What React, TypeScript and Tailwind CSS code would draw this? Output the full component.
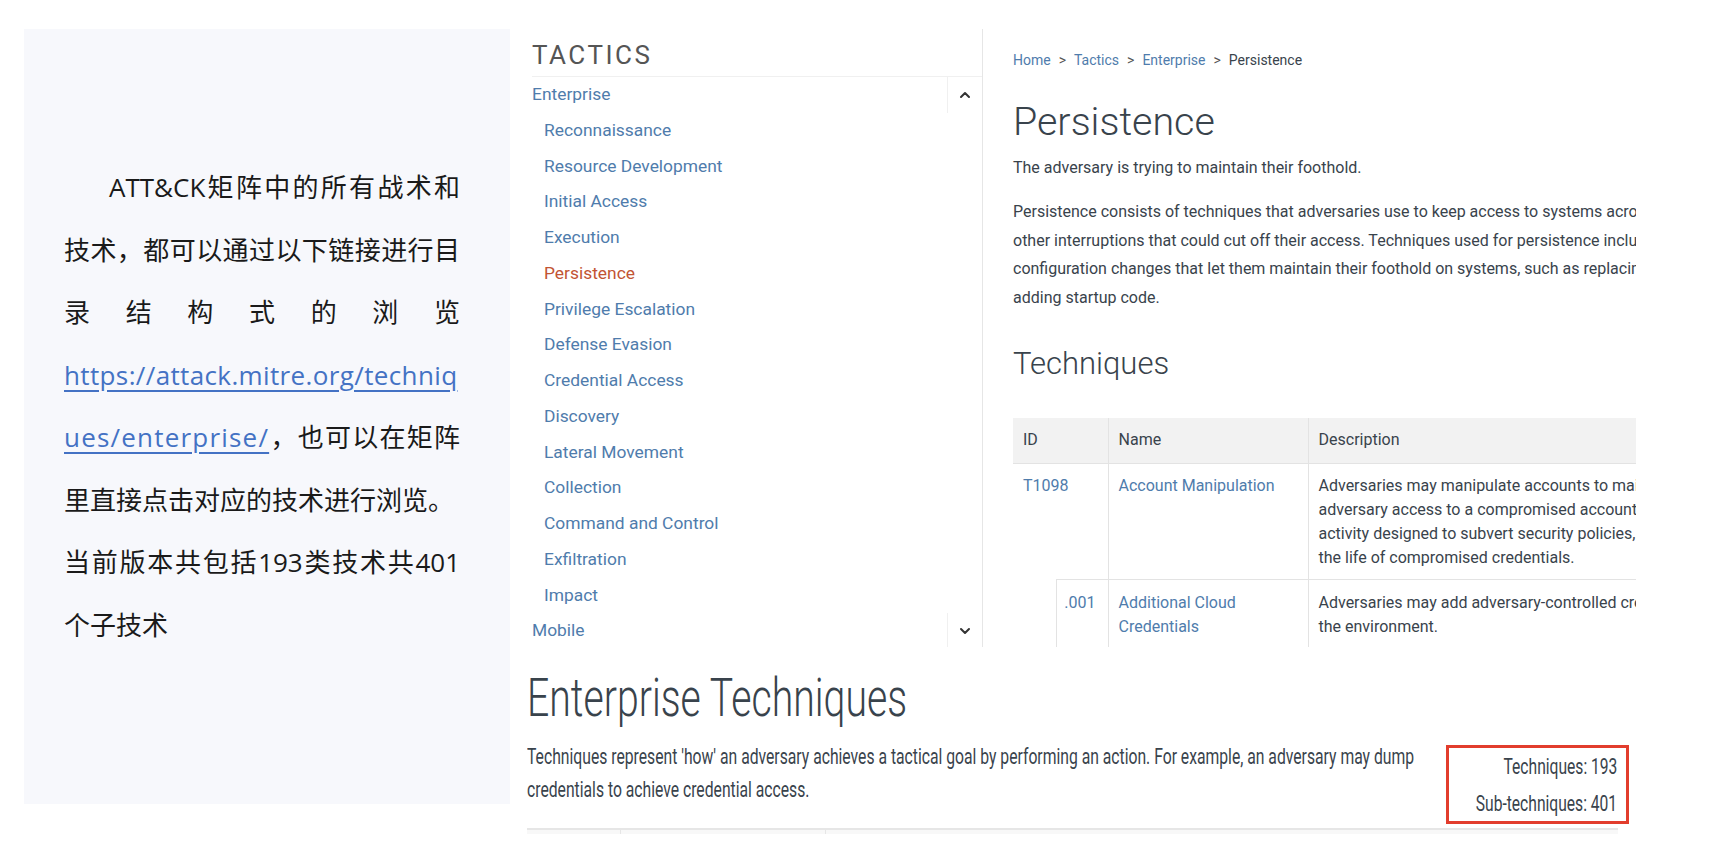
import { ChevronDown, ChevronUp } from "lucide-react";

const tactics = [
  "Reconnaissance",
  "Resource Development",
  "Initial Access",
  "Execution",
  "Persistence",
  "Privilege Escalation",
  "Defense Evasion",
  "Credential Access",
  "Discovery",
  "Lateral Movement",
  "Collection",
  "Command and Control",
  "Exfiltration",
  "Impact",
];

const persistenceText = [
  "Persistence consists of techniques that adversaries use to keep access to systems across restarts, changed credentials, and",
  "other interruptions that could cut off their access. Techniques used for persistence include any access, action, or",
  "configuration changes that let them maintain their foothold on systems, such as replacing or hijacking legitimate code or",
  "adding startup code.",
];

function NotePanel() {
  return (
    <div className="ml-[24px] mt-[29px] h-[775px] w-[486px] shrink-0 bg-[#f7f8fc] pl-[40px] pt-[127px]">
      <div className="w-[396px] font-['Open_Sans','Noto_Sans_CJK_SC',sans-serif] text-[26px] leading-[62.5px] text-[#1a1a1a]">
        <div className="text-justify indent-[45px] [text-align-last:justify]">ATT&amp;CK矩阵中的所有战术和</div>
        <div className="text-justify [text-align-last:justify]">技术，都可以通过以下链接进行目</div>
        <div className="text-justify [text-align-last:justify]">录结构式的浏览</div>
        <div className="whitespace-nowrap tracking-[0.37px]">
          <a className="text-[#4472c4] underline underline-offset-[5px]">https://attack.mitre.org/techniq</a>
        </div>
        <div className="text-justify [text-align-last:justify]">
          <a className="tracking-[1.2px] text-[#4472c4] underline underline-offset-[5px]">ues/enterprise/</a>，也可以在矩阵
        </div>
        <div>里直接点击对应的技术进行浏览。</div>
        <div className="text-justify [text-align-last:justify]">当前版本共包括193类技术共401</div>
        <div>个子技术</div>
      </div>
    </div>
  );
}

function Sidebar() {
  return (
    <aside className="h-[618px] w-[451px] shrink-0 overflow-hidden border-r border-[#e6e6e6]">
      <div className="border-b border-[#f0f0f0] pb-[7px] pt-[12px] text-[26px] leading-[28px] tracking-[2.5px] text-[#555]">
        TACTICS
      </div>
      <div className="text-[17.4px]">
        <div className="flex h-[35.75px]">
          <span className="flex-1 leading-[35.75px] text-[#4f7cac]">Enterprise</span>
          <span className="flex w-[35px] items-center justify-center border-l border-[#f0f0f0] text-[#333]">
            <ChevronUp size={16} strokeWidth={3} />
          </span>
        </div>
        {tactics.map((t) => (
          <div
            key={t}
            className={`h-[35.75px] pl-[12px] leading-[35.75px] ${
              t === "Persistence" ? "text-[#c25433]" : "text-[#4f7cac]"
            }`}
          >
            {t}
          </div>
        ))}
        <div className="flex h-[35.75px]">
          <span className="flex-1 leading-[35.75px] text-[#4f7cac]">Mobile</span>
          <span className="flex w-[35px] items-center justify-center border-l border-[#f0f0f0] text-[#333]">
            <ChevronDown size={16} strokeWidth={3} />
          </span>
        </div>
      </div>
    </aside>
  );
}

function TechniqueTable() {
  const cell = "border-[#e3e3e3] align-top text-left font-normal";
  return (
    <table className="mt-[36px] w-[1000px] table-fixed border-collapse text-[16px] leading-[24px]">
      <colgroup>
        <col className="w-[43px]" />
        <col className="w-[52px]" />
        <col className="w-[200px]" />
        <col />
      </colgroup>
      <thead>
        <tr className="bg-[#f2f2f2]">
          <th colSpan={2} className={`${cell} border-b px-[10px] py-[10.5px]`}>ID</th>
          <th className={`${cell} border-b border-l px-[10px] py-[10.5px]`}>Name</th>
          <th className={`${cell} border-b border-l px-[10px] py-[10.5px]`}>Description</th>
        </tr>
      </thead>
      <tbody>
        <tr>
          <td colSpan={2} className={`${cell} px-[10px] pb-[9px] pt-[10px] text-[#4f7cac]`}>T1098</td>
          <td className={`${cell} border-l px-[10px] pb-[9px] pt-[10px] text-[#4f7cac]`}>Account Manipulation</td>
          <td className={`${cell} whitespace-nowrap border-l px-[10px] pb-[9px] pt-[10px]`}>
            Adversaries may manipulate accounts to maintain and/or elevate access to victim systems. Account manipulation
            <br />
            adversary access to a compromised account, such as modifying credentials or permission groups. These actions
            <br />
            activity designed to subvert security policies, such as performing iterative password updates to bypass
            <br />
            the life of compromised credentials.
          </td>
        </tr>
        <tr>
          <td className="p-0" />
          <td className={`${cell} border-b border-l border-t pb-[10px] pr-[12px] pt-[11px] text-right text-[#4f7cac]`}>.001</td>
          <td className={`${cell} border-b border-l border-t px-[10px] pb-[10px] pt-[11px] text-[#4f7cac]`}>
            Additional Cloud Credentials
          </td>
          <td className={`${cell} whitespace-nowrap border-b border-l border-t px-[10px] pb-[10px] pt-[11px]`}>
            Adversaries may add adversary-controlled credentials to a cloud account to maintain persistent access
            <br />
            the environment.
          </td>
        </tr>
      </tbody>
    </table>
  );
}

function TacticPage() {
  return (
    <main className="h-[618px] w-[653px] shrink-0 overflow-hidden pl-[30px] pt-[21px] text-[#39434c]">
      <nav className="whitespace-nowrap text-[14px] leading-[20px]">
        <span className="text-[#4f7cac]">Home</span>
        <span className="px-[8px] text-[#555]">&gt;</span>
        <span className="text-[#4f7cac]">Tactics</span>
        <span className="px-[8px] text-[#555]">&gt;</span>
        <span className="text-[#4f7cac]">Enterprise</span>
        <span className="px-[8px] text-[#555]">&gt;</span>
        <span>Persistence</span>
      </nav>
      <h1 className="mt-[29px] text-[39.4px] font-light leading-[46px]">Persistence</h1>
      <p className="mt-[10.5px] text-[16px] leading-[24px]">The adversary is trying to maintain their foothold.</p>
      <div className="mt-[18.75px] whitespace-nowrap text-[16px] leading-[28.5px]">
        {persistenceText.map((line) => (
          <div key={line}>{line}</div>
        ))}
      </div>
      <h2 className="mt-[32.5px] text-[31px] font-light leading-[37px]">Techniques</h2>
      <TechniqueTable />
    </main>
  );
}

function EnterpriseSummary() {
  return (
    <section className="mt-[24px] w-[1091px] text-[#39434c]">
      <div className="h-[54px] w-[379px]">
        <h2 className="w-max origin-top-left scale-x-[0.726] whitespace-nowrap text-[54px] font-light leading-[54px]">
          Enterprise Techniques
        </h2>
      </div>
      <div className="mt-[15px] flex items-start justify-between">
        <div className="h-[66px] w-[890px] shrink-0">
          <div className="w-max origin-top-left scale-x-[0.714] whitespace-nowrap text-[22px] leading-[33px]">
            <div>
              Techniques represent 'how' an adversary achieves a tactical goal by performing an action. For example, an adversary may dump
            </div>
            <div>credentials to achieve credential access.</div>
          </div>
        </div>
        <div className="-mr-[11px] mt-[5px] flex h-[79px] w-[183px] shrink-0 flex-col items-end border-[3px] border-[#e23d2d] pr-[9px] text-[22px] leading-[37px]">
          <span className="w-max origin-right scale-x-[0.71] whitespace-nowrap">Techniques: 193</span>
          <span className="w-max origin-right scale-x-[0.71] whitespace-nowrap">Sub-techniques: 401</span>
        </div>
      </div>
      <div className="mt-[4px] h-[2px] bg-[#e6e6e6]" />
      <div className="flex h-[4px] bg-[#f8f8f8]">
        <div className="w-[93px]" />
        <div className="w-[205px] border-l border-[#e6e6e6]" />
        <div className="flex-1 border-l border-[#e6e6e6]" />
      </div>
    </section>
  );
}

export default function App() {
  return (
    <div className="flex h-[861px] w-[1727px] overflow-hidden bg-white">
      <NotePanel />
      <div className="ml-[17px] flex flex-col pt-[29px] font-['Roboto',sans-serif]">
        <div className="ml-[5px] flex">
          <Sidebar />
          <TacticPage />
        </div>
        <EnterpriseSummary />
      </div>
    </div>
  );
}
